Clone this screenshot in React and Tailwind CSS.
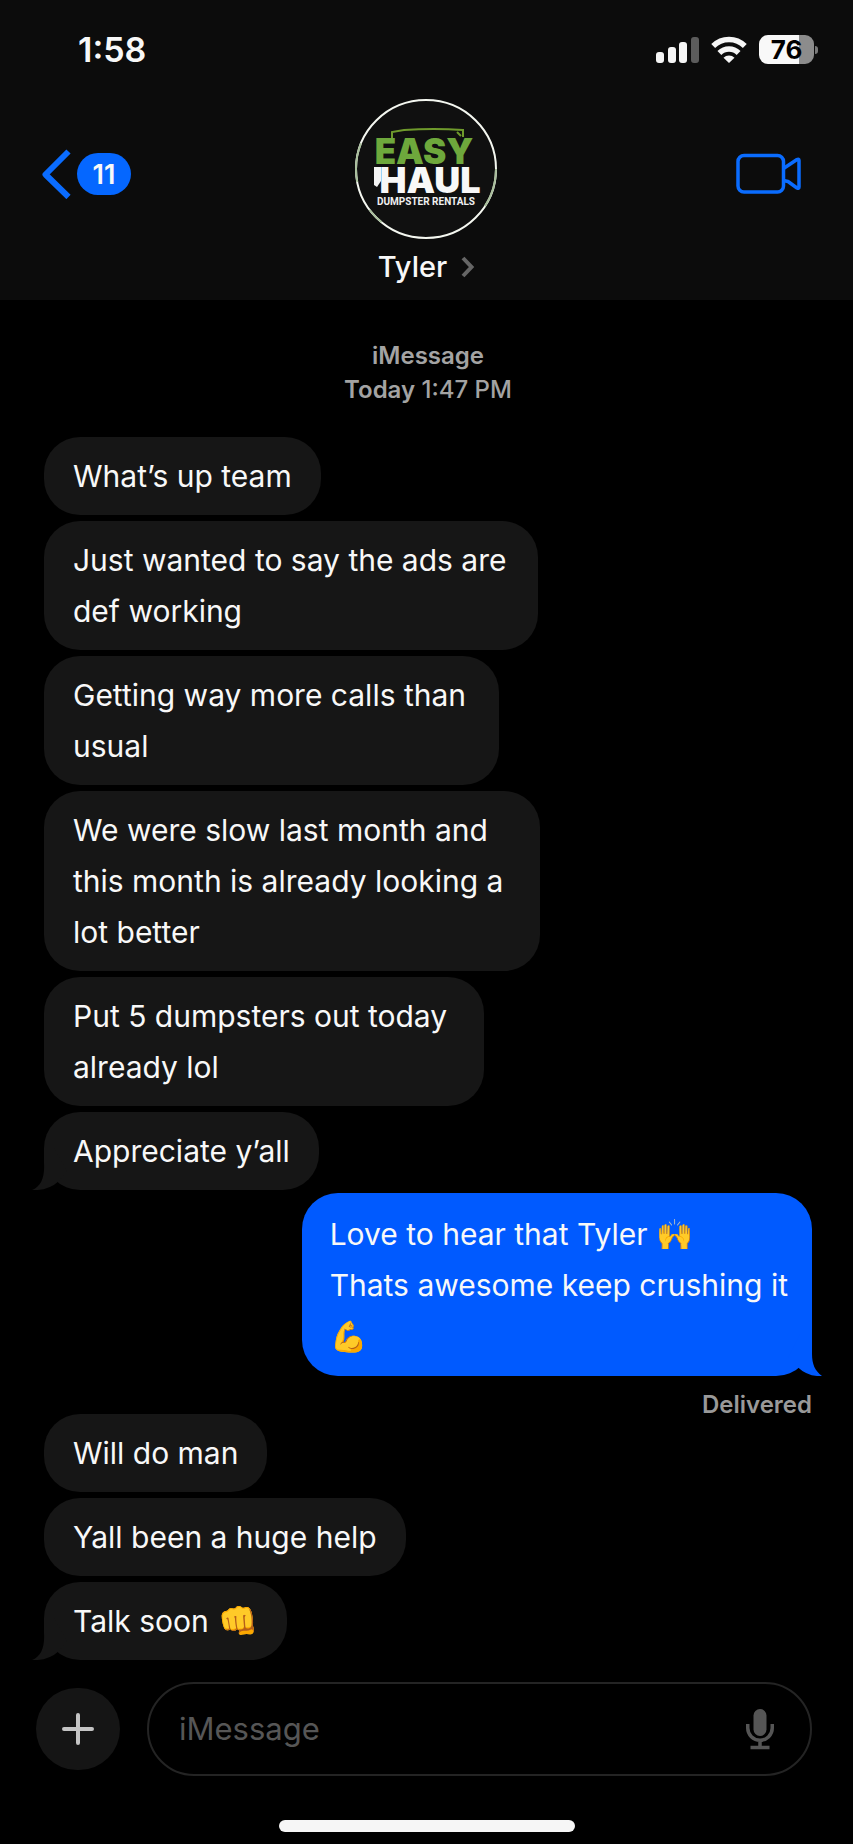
// App.jsx
import React, { useState } from 'react';

const MESSAGES = [
    { id: 1, text: 'What’s up team' },
    { id: 2, text: 'Just wanted to say the ads are def working', width: 'max-w-[494px]' },
    { id: 3, text: 'Getting way more calls than usual', width: 'max-w-[455px]' },
    { id: 4, text: 'We were slow last month and this month is already looking a lot better', width: 'max-w-[496px]' },
    { id: 5, text: 'Put 5 dumpsters out today already lol', width: 'max-w-[440px]' },
    { id: 6, text: 'Appreciate y’all', tail: true },
];

const REPLIES = [
    { id: 8, text: 'Will do man' },
    { id: 9, text: 'Yall been a huge help' },
    { id: 10, text: 'Talk soon', emoji: '👊', tail: true },
];

function StatusBar() {
    return (
        <div className="flex h-[99px] items-center justify-between pl-[78px] pr-[35px]">
            <span className="text-[34px] font-semibold leading-none">1:58</span>
            <div className="flex items-center gap-3">
                <svg width="43" height="28" viewBox="0 0 43 28" fill="#f5f5f5" aria-label="Signal">
                    <rect x="0" y="16" width="8" height="11" rx="3" />
                    <rect x="12" y="11" width="8" height="16" rx="3" />
                    <rect x="23" y="6" width="8" height="21" rx="3" />
                    <rect x="35" y="1" width="8" height="26" rx="3" fill="#5c5c5c" />
                </svg>
                <svg width="36" height="28" viewBox="0 0 36 28" fill="none" stroke="#f5f5f5" strokeWidth="5.500" aria-label="Wi-Fi">
                    <path d="M2.200 10a22.400 22.400 0 0 1 31.600 0" />
                    <path d="M8.400 17a13.600 13.600 0 0 1 19.200 0" />
                    <path d="M18 27l-5.500-5.200a7.500 7.500 0 0 1 11 0z" fill="#f5f5f5" stroke="none" />
                </svg>
                <div className="flex items-center gap-px">
                    <div className="flex h-[29px] w-[55px] items-center justify-center rounded-[9px] bg-linear-to-r from-[#f8f8f8] from-[73%] to-[#8c8c8c] to-[73%] text-[26px] font-bold leading-none text-black">
                        76
                    </div>
                    <div className="h-2 w-[3px] rounded-r-full bg-[#7a7a7a]" />
                </div>
            </div>
        </div>
    );
}

function Avatar() {
    return (
        <svg width="144" height="140" viewBox="0 0 144 140" role="img" aria-label="Easy Haul Dumpster Rentals">
            <ellipse cx="71" cy="70" rx="70" ry="69" fill="#101010" stroke="#f4f7f0" strokeWidth="2" />
            <ellipse
                cx="71"
                cy="70"
                rx="70"
                ry="69"
                fill="none"
                stroke="#a9bf9c"
                strokeWidth="2"
                pathLength="100"
                strokeDasharray="9 27 4 7 9 44"
            />
            <path d="M37 39v-6l12-2q30-2 59 0v7M102 33l4 4" fill="none" stroke="#6f9a2c" strokeWidth="2" />
            <text x="69" y="65" textAnchor="middle" className="fill-[#6ea83c] text-[35px] font-black">EASY</text>
            <path d="M19 68h7v14l-4 6-3-2z" fill="#f4f4f4" />
            <text x="75" y="94" textAnchor="middle" className="fill-[#f8f8f8] text-[36px] font-black">HAUL</text>
            <text x="71" y="106" textAnchor="middle" className="fill-[#f0f0f0] font-[Roboto] text-[10px] font-bold">DUMPSTER RENTALS</text>
        </svg>
    );
}

function Header() {
    return (
        <header className="bg-[#0c0c0c]">
            <StatusBar />
            <div className="grid grid-cols-[1fr_auto_1fr] items-start px-[41px]">
                <button className="mt-[50px] flex items-center gap-1.5 justify-self-start" aria-label="Back, 11 unread">
                    <svg width="30" height="50" viewBox="0 0 30 50" fill="none" stroke="#0a6cff" strokeWidth="6">
                        <path d="M27.500 2.500L4.500 25.500l23 22.500" strokeLinejoin="round" />
                    </svg>
                    <span className="flex h-[42px] w-[54px] items-center justify-center rounded-full bg-[#0567ff] text-[27px] font-semibold leading-none">11</span>
                </button>
                <div className="flex flex-col items-center pb-[15px]">
                    <Avatar />
                    <button className="mt-2.5 flex items-center gap-3.5 text-[29px] font-medium leading-9">
                        Tyler
                        <svg width="14" height="22" viewBox="0 0 14 22" fill="none" stroke="#666" strokeWidth="4">
                            <path d="M2 2l8.500 9L2 20" />
                        </svg>
                    </button>
                </div>
                <button className="mr-2.5 mt-[54px] justify-self-end" aria-label="Video call">
                    <svg width="66" height="42" viewBox="0 0 66 42" fill="none" stroke="#0a6cff" strokeWidth="3.500" strokeLinejoin="round">
                        <rect x="2" y="2.500" width="45.500" height="36.500" rx="6" />
                        <path d="M47.500 15.500L61 6.500q2-1 2 1v26.500q0 2-2 1L52 28.500l-4.500-1" />
                    </svg>
                </button>
            </div>
        </header>
    );
}

function Bubble({ text, emoji, width = '', tail }) {
    return (
        <div className={`relative w-fit rounded-[36px] bg-[#161616] px-[29px] pb-[13px] pt-3.5 ${width}`}>
            {tail && (
                <svg className="absolute -left-3 bottom-0 fill-[#161616]" width="42" height="46" viewBox="0 0 42 46" aria-hidden="true">
                    <path d="M12 4v15C13 33 9 43 0 46q16 1 27-9l8-10L22 4z" />
                </svg>
            )}
            <p className="relative">
                {text}
                {emoji && <span className="text-[32px] leading-none"> {emoji}</span>}
            </p>
        </div>
    );
}

function SentBubble() {
    return (
        <div className="relative w-fit max-w-[512px] self-end rounded-[36px] bg-[#005aff] pb-3.5 pl-7 pr-6 pt-4">
            <svg className="absolute -right-2.5 bottom-0 fill-[#005aff]" width="42" height="46" viewBox="0 0 42 46" aria-hidden="true">
                <path d="M32 4v20C32 34 35 41 42 46Q28 47 17.500 37L8 28 20 4z" />
            </svg>
            <p className="relative">
                Love to hear that Tyler 🙌
                <br />
                Thats awesome keep crushing it
                <br />
                💪
            </p>
        </div>
    );
}

function Composer() {
    const [draft, setDraft] = useState('');

    return (
        <footer className="px-9">
            <form className="flex items-center gap-[27px] pr-[5px]" onSubmit={(e) => e.preventDefault()}>
                <button type="button" aria-label="Add attachment" className="flex h-[82px] w-[84px] shrink-0 items-center justify-center rounded-full bg-[#151515]">
                    <svg width="32" height="32" viewBox="0 0 32 32" fill="none" stroke="#c4c4c4" strokeWidth="4" strokeLinecap="round">
                        <path d="M16 2v28M2 16h28" />
                    </svg>
                </button>
                <div className="flex h-[94px] min-w-0 flex-1 items-center rounded-full border-2 border-[#242424] pl-[30px] pr-9">
                    <input
                        type="text"
                        aria-label="Message"
                        placeholder="iMessage"
                        className="min-w-0 flex-1 bg-transparent text-[31px] leading-10 outline-none placeholder:text-[#565656]"
                        value={draft}
                        onChange={(e) => setDraft(e.target.value)}
                    />
                    <button type="button" aria-label="Dictate">
                        <svg width="28" height="41" viewBox="0 0 28 41" fill="none" stroke="#555" strokeWidth="3.500">
                            <rect x="7.500" y="0" width="13" height="27" rx="6.500" fill="#555" stroke="none" />
                            <path d="M1.750 15v4a12.250 12.250 0 0 0 24.500 0v-4M14 31v7M4.500 38.500h19" />
                        </svg>
                    </button>
                </div>
            </form>
            <div className="mx-auto mt-11 h-3 w-[296px] rounded-full bg-[#f6f6f6]" />
        </footer>
    );
}

function App() {
    return (
        <div className="flex min-h-screen flex-col bg-black font-[Inter,sans-serif] text-[#f8f8f8]">
            <Header />
            <main className="flex flex-col gap-1.5 pb-[22px] pl-11 pr-[41px] pt-[39px] text-[30px] leading-[51px]">
                <div className="mb-6 text-center text-[24px] font-medium leading-[34px] text-[#a3a3a3]">
                    <p className="font-semibold">iMessage</p>
                    <p>
                        <span className="font-semibold">Today</span> 1:47 PM
                    </p>
                </div>
                {MESSAGES.map((message) => (
                    <Bubble key={message.id} {...message} />
                ))}
                <div className="-mt-[3px] flex flex-col">
                    <SentBubble />
                    <p className="-mb-[9px] self-end pt-[17px] text-[24px] font-semibold leading-6 text-[#999]">Delivered</p>
                </div>
                {REPLIES.map((message) => (
                    <Bubble key={message.id} {...message} />
                ))}
            </main>
            <Composer />
        </div>
    );
}

export default App;
